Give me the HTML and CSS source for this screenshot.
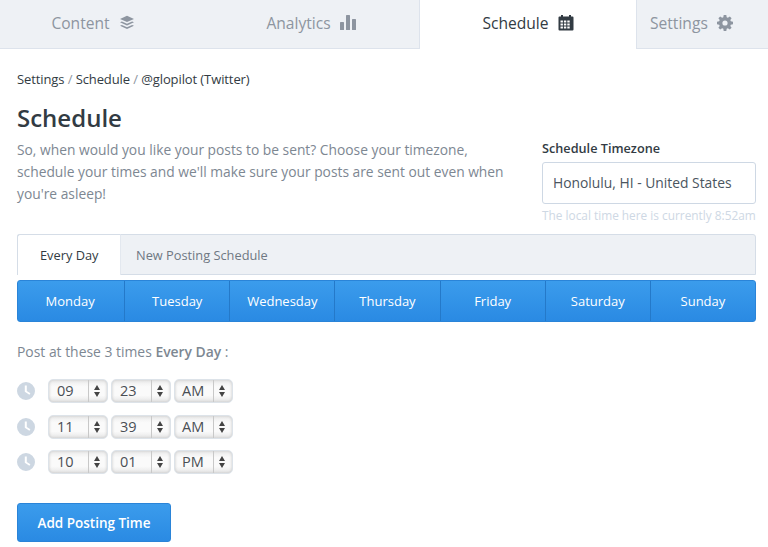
FILE: index.html
```html
<!DOCTYPE html>
<html lang="en">
<head>
<meta charset="utf-8">
<title>Schedule</title>
<link rel="stylesheet" href="styles.css">
</head>
<body>
<nav class="topnav">
  <a class="toptab tab-content">Content
    <svg class="ticon" viewBox="0 0 16 16"><path d="M8 .8 15 3.9 8 7 1 3.9z"/><path d="M2.9 6.4 8 8.7l5.1-2.3L15 7.3 8 10.4 1 7.3z"/><path d="M2.9 9.9 8 12.2l5.1-2.3 1.900.9L8 13.900 1 10.800z"/></svg>
  </a>
  <a class="toptab tab-analytics">Analytics
    <svg class="ticon" viewBox="0 0 16 16"><rect x="0" y="7" width="4" height="8" rx=".6"/><rect x="6" y="0" width="4" height="15" rx=".6"/><rect x="12" y="4" width="4" height="11" rx=".6"/></svg>
  </a>
  <a class="toptab tab-schedule">Schedule
    <svg class="ticon" viewBox="0 0 16 16"><path fill-rule="evenodd" d="M3 0h2v1.500h6V0h2v1.500h1.500A1 1 0 0 1 15.500 2.500v12a1 1 0 0 1-1 1h-13a1 1 0 0 1-1-1v-12a1 1 0 0 1 1-1H3zM2.500 5.500v2h2.400v-2zm3.400 0v2h2.400v-2zm3.400 0v2h2.400v-2zM2.500 8.500v2h2.400v-2zm3.400 0v2h2.400v-2zm3.400 0v2h2.400v-2zM2.500 11.500v2h2.400v-2zm3.400 0v2h2.400v-2zm3.400 0v2h2.400v-2z"/></svg>
  </a>
  <a class="toptab tab-settings">Settings
    <svg class="ticon" viewBox="0 0 16 16"><path fill-rule="evenodd" d="M6.700 0h2.600l.4 2.200 1.200.5L12.800 1.400l1.800 1.800-1.300 1.900.5 1.200 2.200.4v2.600l-2.200.4-.5 1.200 1.300 1.900-1.800 1.800-1.900-1.300-1.200.5-.4 2.200H6.700l-.4-2.200-1.200-.5-1.900 1.300-1.800-1.800 1.300-1.900-.5-1.200L0 9.300V6.700l2.200-.4.5-1.200L1.400 3.200l1.800-1.800 1.900 1.300 1.200-.5zM8 5.400a2.600 2.600 0 1 0 0 5.200 2.600 2.600 0 0 0 0-5.200z"/></svg>
  </a>
</nav>

<main class="page">
  <p class="crumbs">Settings <span class="sep">/</span> Schedule <span class="sep">/</span> @glopilot (Twitter)</p>

  <section class="intro">
    <div class="intro-text">
      <h1>Schedule</h1>
      <p>So, when would you like your posts to be sent? Choose your timezone, schedule your times and we'll make sure your posts are sent out even when you're asleep!</p>
    </div>
    <div class="tz">
      <label class="tz-label">Schedule Timezone</label>
      <div class="tz-input">Honolulu, HI - United States</div>
      <p class="tz-note">The local time here is currently 8:52am</p>
    </div>
  </section>

  <div class="subtabs">
    <a class="subtab active">Every Day</a>
    <a class="subtab">New Posting Schedule</a>
  </div>

  <div class="days">
    <a class="day">Monday</a>
    <a class="day">Tuesday</a>
    <a class="day">Wednesday</a>
    <a class="day">Thursday</a>
    <a class="day">Friday</a>
    <a class="day">Saturday</a>
    <a class="day">Sunday</a>
  </div>

  <p class="post-count">Post at these 3 times <b>Every Day</b> :</p>

  <div class="times">
    <div class="time-row">
      <svg class="clock" viewBox="0 0 18 18"><path d="M9 0a9 9 0 1 1 0 18A9 9 0 0 1 9 0zM7.800 3.500v6.300l4.600 3 1-1.500-3.600-2.400V3.500z" fill-rule="evenodd"/></svg>
      <div class="sel"><span class="val">09</span><span class="arrows"></span></div>
      <div class="sel"><span class="val">23</span><span class="arrows"></span></div>
      <div class="sel ampm"><span class="val">AM</span><span class="arrows"></span></div>
    </div>
    <div class="time-row">
      <svg class="clock" viewBox="0 0 18 18"><path d="M9 0a9 9 0 1 1 0 18A9 9 0 0 1 9 0zM7.800 3.500v6.300l4.600 3 1-1.500-3.600-2.400V3.500z" fill-rule="evenodd"/></svg>
      <div class="sel"><span class="val">11</span><span class="arrows"></span></div>
      <div class="sel"><span class="val">39</span><span class="arrows"></span></div>
      <div class="sel ampm"><span class="val">AM</span><span class="arrows"></span></div>
    </div>
    <div class="time-row">
      <svg class="clock" viewBox="0 0 18 18"><path d="M9 0a9 9 0 1 1 0 18A9 9 0 0 1 9 0zM7.800 3.500v6.300l4.600 3 1-1.500-3.600-2.400V3.500z" fill-rule="evenodd"/></svg>
      <div class="sel"><span class="val">10</span><span class="arrows"></span></div>
      <div class="sel"><span class="val">01</span><span class="arrows"></span></div>
      <div class="sel ampm"><span class="val">PM</span><span class="arrows"></span></div>
    </div>
  </div>

  <a class="add-btn">Add Posting Time</a>
</main>
</body>
</html>
```

FILE: styles.css
```css
* { box-sizing: border-box; }
html, body { margin: 0; padding: 0; }
body {
  width: 768px;
  height: 547px;
  overflow: hidden;
  background: #fff;
  font-family: "Open Sans", sans-serif;
  color: #323b43;
}
p { margin: 0; }

.topnav { display: flex; height: 49px; background: #eef1f5; }
.toptab {
  display: flex;
  align-items: center;
  justify-content: center;
  gap: 9px;
  font-size: 15.600px;
  color: #8d95a0;
  border-bottom: 1px solid #dde3ec;
  padding-bottom: 3px;
}
.ticon { width: 16px; height: 16px; fill: #8d95a0; }
.tab-content { width: 205px; padding-right: 19px; }
.tab-analytics { width: 214px; padding-right: 2px; }
.tab-schedule {
  width: 218px;
  background: #fff;
  color: #323b43;
  border-left: 1px solid #dde3ec;
  border-right: 1px solid #dde3ec;
  border-bottom: 0;
  padding-bottom: 4px;
}
.tab-schedule .ticon { fill: #323b43; }
.tab-settings { flex: 1; justify-content: flex-start; padding-left: 13px; gap: 9px; }

.page { padding: 21px 12px 0 17px; }
.crumbs { font-size: 13px; line-height: 18px; color: #323b43; letter-spacing: -.1px; }
.sep { color: #8d95a0; }

.intro { display: flex; justify-content: space-between; margin-top: 13px; }
.intro-text { width: 495px; }
h1 { margin: 0; font-size: 24px; line-height: 34px; font-weight: 600; color: #323b43; }
.intro-text p { margin-top: 4px; font-size: 13.800px; line-height: 22px; color: #7d8792; }
.tz { width: 214px; margin-top: 38px; }
.tz-label { display: block; font-size: 12.700px; line-height: 18px; font-weight: 600; color: #323b43; }
.tz-input {
  height: 42px;
  margin-top: 5px;
  padding-left: 10px;
  border: 1px solid #ced8e4;
  border-radius: 3px;
  font-size: 13.850px;
  line-height: 40px;
  color: #4a5560;
}
.tz-note { margin-top: 2px; font-size: 11.850px; line-height: 18px; color: #ced8e4; white-space: nowrap; }

.subtabs {
  display: flex;
  height: 41px;
  margin-top: 10px;
  background: #eef1f5;
  border: 1px solid #d5dde7;
  border-radius: 3px 3px 0 0;
}
.subtab { padding: 0 15px; font-size: 12.800px; line-height: 40px; color: #6f7883; }
.subtab.active {
  width: 104px;
  margin: -1px 0 -1px -1px;
  padding: 0 0 0 22px;
  line-height: 41px;
  background: #fff;
  color: #323b43;
  border: 1px solid #d5dde7;
  border-bottom: 0;
  border-right-color: #e3e8ef;
  border-radius: 3px 0 0 0;
}

.days {
  display: flex;
  height: 42px;
  margin-top: 5px;
  padding-left: 1px;
  background: linear-gradient(#3b9cec, #2a8ae3);
  border: 1px solid #2a84d8;
  border-radius: 3px;
}
.day {
  flex: 1;
  text-align: center;
  font-size: 13px;
  line-height: 40px;
  color: #fff;
  border-left: 1px solid #2479c9;
}
.day:first-child { border-left-color: transparent; text-indent: -4px; }

.post-count { margin-top: 20px; font-size: 13.900px; line-height: 20px; color: #7d8792; }
.post-count b { font-weight: 600; }

.times { display: flex; flex-direction: column; gap: 11.500px; margin-top: 17px; }
.time-row { display: flex; align-items: center; gap: 3px; height: 24px; }
.clock { width: 18px; height: 18px; fill: #cdd7e2; margin-right: 10px; }
.sel {
  display: flex;
  width: 60px;
  height: 24px;
  background: linear-gradient(#ebebeb, #fafafa 30%, #fafafa 70%, #e6e6e6);
  border: 1px solid #dde3e9;
  border-radius: 5px;
  box-shadow: inset 0 0 3px #c4c4c4;
  font-size: 14.500px;
  line-height: 22px;
  color: #4a4f55;
}
.sel.ampm { width: 59px; }
.val { flex: 1; padding-left: 8px; }
.arrows {
  position: relative;
  width: 19px;
  border-left: 1px solid #c8c8c8;
}
.arrows::before, .arrows::after {
  content: "";
  position: absolute;
  left: 5px;
  border-left: 3px solid transparent;
  border-right: 3px solid transparent;
}
.arrows::before { top: 5px; border-bottom: 5px solid #444; }
.arrows::after { top: 12px; border-top: 5px solid #444; }
.sel.ampm .val { padding-left: 7px; }

.add-btn {
  display: block;
  width: 154px;
  height: 39px;
  margin-top: 29px;
  background: linear-gradient(#3b9cec, #2a8ae3);
  border: 1px solid #2a84d8;
  border-radius: 3px;
  text-align: center;
  font-size: 13.500px;
  font-weight: 600;
  line-height: 38px;
  color: #fff;
}
```
